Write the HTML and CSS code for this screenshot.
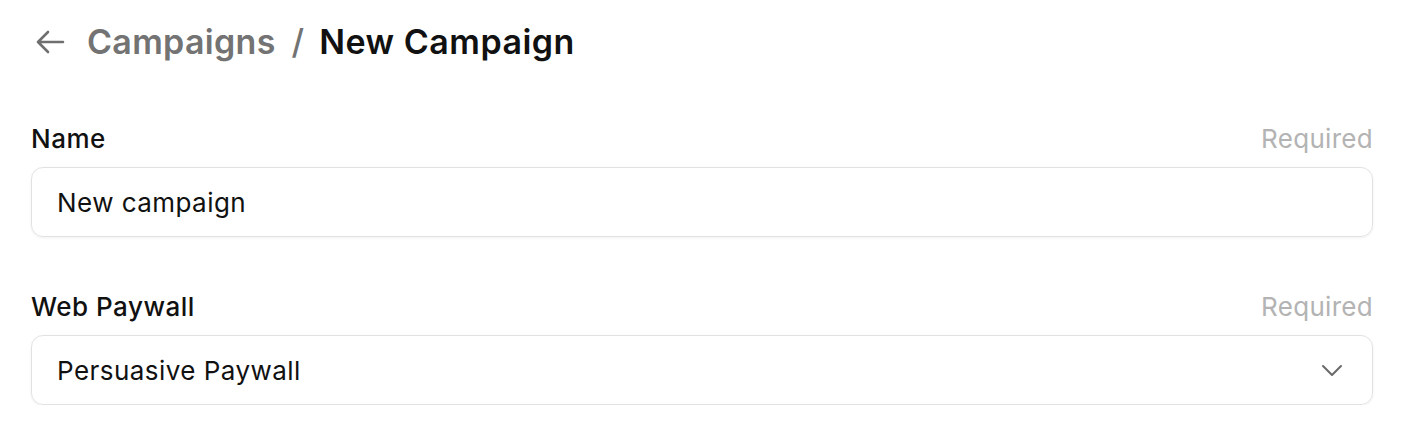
FILE: index.html
```html
<!DOCTYPE html>
<html>
<head>
<meta charset="utf-8">
<link rel="stylesheet" href="styles.css">
</head>
<body>
<div class="page">
  <header class="crumbs">
    <svg class="back" width="32" height="32" viewBox="0 0 32 32" fill="none" stroke="#6f6f6f" stroke-width="2.6" stroke-linecap="round" stroke-linejoin="round"><path d="M29 16H4M14 6L4 16l10 10"/></svg>
    <span class="parent">Campaigns</span>
    <span class="sep">/</span>
    <span class="current">New Campaign</span>
  </header>
  <div class="field first">
    <div class="label-row"><span class="label">Name</span><span class="req">Required</span></div>
    <div class="box"><span class="value">New campaign</span></div>
  </div>
  <div class="field">
    <div class="label-row"><span class="label">Web Paywall</span><span class="req">Required</span></div>
    <div class="box select"><span class="value">Persuasive Paywall</span>
      <svg class="chev" width="24" height="24" viewBox="0 0 24 24" fill="none" stroke="#6a6a6a" stroke-width="2" stroke-linecap="round" stroke-linejoin="round"><path d="M3 8l9 9 9-9"/></svg>
    </div>
  </div>
</div>
</body>
</html>
```
FILE: styles.css
```css
* { box-sizing: border-box; }
body { margin: 0; background: #fff; font-family: Inter, "Noto Sans", sans-serif; color: #111; }
.page { padding: 20px 37px 0 31px; display: flex; flex-direction: column; }
.crumbs { display: flex; align-items: center; height: 44px; line-height: 44px; padding-left: 3px; }
.back { margin-right: 21px; }
.parent { font-size: 34px; font-weight: 600; color: #737373; letter-spacing: 0.3px; }
.sep { font-size: 34px; font-weight: 500; color: #737373; margin: 0 15px 0 16px; }
.current { font-size: 34px; font-weight: 600; color: #111; letter-spacing: 0.5px; }
.field { display: flex; flex-direction: column; margin-top: 55px; }
.field.first { margin-top: 60px; }
.label-row { display: flex; justify-content: space-between; align-items: baseline; height: 32px; line-height: 30px; margin-bottom: 11px; }
.label { font-size: 26px; font-weight: 500; color: #111; letter-spacing: 0.5px; }
.req { font-size: 26px; color: #b3b3b3; letter-spacing: 0.3px; }
.box { height: 70px; border: 1.5px solid #e2e2e2; border-radius: 12px; box-shadow: 0 1px 3px rgba(0,0,0,0.06); display: flex; align-items: center; padding: 0 25px; }
.value { font-size: 26px; color: #111; letter-spacing: 0.45px; }
.select { justify-content: space-between; padding-right: 28px; }
```
